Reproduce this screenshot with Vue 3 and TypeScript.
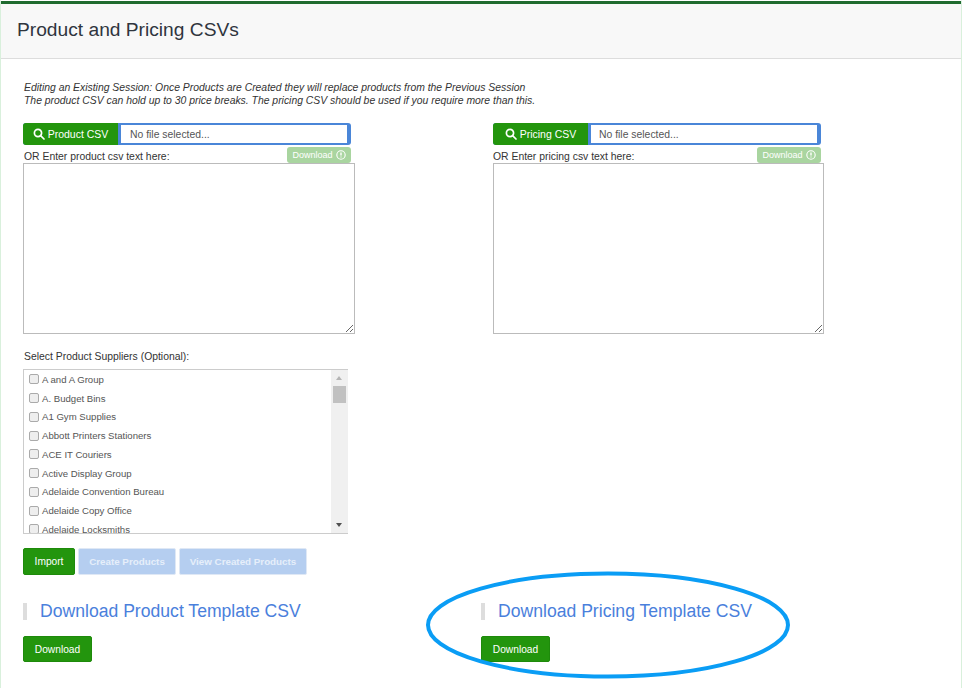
<script setup lang="ts">
const suppliers: string[] = [
  'A and A Group',
  'A. Budget Bins',
  'A1 Gym Supplies',
  'Abbott Printers Stationers',
  'ACE IT Couriers',
  'Active Display Group',
  'Adelaide Convention Bureau',
  'Adelaide Copy Office',
  'Adelaide Locksmiths',
]

const uploads = [
  { button: 'Product CSV', label: 'OR Enter product csv text here:' },
  { button: 'Pricing CSV', label: 'OR Enter pricing csv text here:' },
]

const templates = ['Download Product Template CSV', 'Download Pricing Template CSV']
</script>

<template>
  <div class="page">
    <header class="head">
      <h1>Product and Pricing CSVs</h1>
    </header>
    <main class="body">
      <p class="note">
        Editing an Existing Session: Once Products are Created they will replace products from the Previous Session<br />
        The product CSV can hold up to 30 price breaks. The pricing CSV should be used if you require more than this.
      </p>
      <div class="uploads">
        <section v-for="u in uploads" :key="u.button" class="upload">
          <div class="file">
            <span class="file-btn">
              <svg width="12" height="12" viewBox="0 0 12 12" fill="none" stroke="#fff" stroke-width="1.7">
                <circle cx="5" cy="5" r="3.6" />
                <path d="M7.6 7.6 11 11" stroke-linecap="round" />
              </svg>
              {{ u.button }}
            </span>
            <span class="file-name">No file selected...</span>
          </div>
          <div class="label-row">
            <label>{{ u.label }}</label>
            <span class="mini">
              Download
              <svg width="10" height="10" viewBox="0 0 10 10" fill="none" stroke="#fff">
                <circle cx="5" cy="5" r="4.2" stroke-width="1.1" />
                <path d="M5 2.6v3" stroke-width="1.4" />
                <path d="M5 6.6v1" stroke-width="1.2" />
              </svg>
            </span>
          </div>
          <textarea class="area"></textarea>
        </section>
      </div>

      <div class="suppliers-label">Select Product Suppliers (Optional):</div>
      <div class="suppliers">
        <ul class="list">
          <li v-for="s in suppliers" :key="s">
            <span class="box"></span>
            {{ s }}
          </li>
        </ul>
        <div class="scroll">
          <span class="up"></span>
          <span class="thumb"></span>
          <span class="down"></span>
        </div>
      </div>

      <div class="actions">
        <button class="btn green">Import</button>
        <button class="btn pale">Create Products</button>
        <button class="btn pale">View Created Products</button>
      </div>

      <div class="templates">
        <section v-for="t in templates" :key="t" class="template">
          <h2>{{ t }}</h2>
          <button class="btn green dl">Download</button>
        </section>
      </div>
    </main>

    <svg class="circle" width="370" height="112" viewBox="0 0 370 112" fill="none">
      <ellipse cx="185" cy="56" rx="180" ry="51.5" stroke="#0a9df5" stroke-width="4" />
    </svg>
  </div>
</template>

<style>
html,
body {
  margin: 0;
  background: #fff;
}
</style>

<style scoped>
.page {
  position: relative;
  width: 962px;
  height: 688px;
  box-sizing: border-box;
  overflow: hidden;
  background: #fff;
  border-top: 1px solid #fff;
  border-left: 1px solid #d9f0dc;
  border-right: 1px solid #d9f0dc;
  font-family: "Liberation Sans", Arial, sans-serif;
  color: #333;
}
.head {
  box-sizing: border-box;
  border-top: 3px solid #1f6b2f;
  height: 58px;
  background: #f8f8f8;
  border-bottom: 1px solid #ddd;
  padding: 0 16px;
  display: flex;
  align-items: center;
}
h1 {
  margin: 0;
  font-size: 19.2px;
  font-weight: 400;
  color: #2f353e;
  position: relative;
  top: -1px;
}
.body {
  padding: 0 0 0 22px;
}
.note {
  margin: 22px 0 0 1px;
  font-size: 10.4px;
  line-height: 13px;
  font-style: italic;
  color: #333;
}
.uploads {
  display: flex;
  gap: 138px;
  margin-top: 16px;
}
.upload {
  width: 332px;
}
.file {
  width: 328px;
  height: 22px;
  display: flex;
  box-sizing: border-box;
  border-radius: 3px;
  overflow: hidden;
  background: #4a86d8;
  font-size: 10.5px;
}
.file-btn {
  width: 95px;
  background: #23950d;
  color: #fff;
  display: flex;
  align-items: center;
  justify-content: center;
  gap: 3px;
  flex: none;
}
.file-name {
  flex: 1;
  margin: 2px 4px 2px 3px;
  background: #fff;
  color: #555;
  padding-left: 9px;
  display: flex;
  align-items: center;
  font-size: 10.4px;
}
.upload:last-child .file-name {
  padding-left: 8px;
}
.label-row {
  width: 328px;
  height: 18px;
  display: flex;
  justify-content: space-between;
  align-items: flex-end;
  font-size: 10.4px;
}
.label-row label {
  padding: 0 0 1px 1px;
}
.upload:last-child .label-row label {
  padding-left: 0;
}
.mini {
  width: 64px;
  height: 16px;
  background: #a9d5a0;
  border-radius: 3px;
  color: #fff;
  font-size: 9px;
  display: flex;
  align-items: center;
  justify-content: center;
  gap: 3px;
  padding-bottom: 1px;
  box-sizing: border-box;
}
.area {
  display: block;
  width: 332px;
  height: 171px;
  box-sizing: border-box;
  margin: 0;
  border: 1px solid #bbb;
  background: #fff;
}
.upload:last-child .area {
  width: 331px;
}
.suppliers-label {
  margin: 16px 0 0 1px;
  font-size: 10.4px;
  line-height: 14px;
}
.suppliers {
  margin-top: 5px;
  width: 325px;
  height: 165px;
  box-sizing: border-box;
  display: flex;
  border: 1px solid #ccc;
  border-right: 0;
  overflow: hidden;
}
.list {
  flex: 1;
  list-style: none;
  margin: 0;
  padding: 0;
  font-size: 9.6px;
  color: #555;
}
.list li {
  height: 18.75px;
  display: flex;
  align-items: center;
  gap: 3px;
  padding-left: 5px;
}
.box {
  width: 8px;
  height: 8px;
  border: 1px solid #aaa;
  border-radius: 2px;
  background: #eee;
  flex: none;
}
.scroll {
  position: relative;
  width: 17px;
  background: #f0f0f0;
  flex: none;
}
.thumb {
  position: absolute;
  left: 2px;
  top: 16px;
  width: 13px;
  height: 17px;
  background: #c1c1c1;
}
.up,
.down {
  position: absolute;
  left: 5px;
  width: 0;
  height: 0;
  border-left: 3.5px solid transparent;
  border-right: 3.5px solid transparent;
}
.up {
  top: 6px;
  border-bottom: 4px solid #b5b5b5;
}
.down {
  bottom: 6px;
  border-top: 4px solid #505050;
}
.actions {
  display: flex;
  gap: 3px;
  margin-top: 14px;
}
.btn {
  height: 27px;
  box-sizing: border-box;
  padding: 0;
  border: 1px solid #1e8a0b;
  border-radius: 2px;
  font: 400 10.2px "Liberation Sans", Arial, sans-serif;
  color: #fff;
}
.green {
  width: 52px;
  background: #23950d;
}
.pale {
  background: #b5cef0;
  border: 1px solid #dfe8f5;
  width: 98px;
  color: #e6eefa;
  font-weight: 700;
  font-size: 9.8px;
}
.pale:last-child {
  width: 128px;
}
.templates {
  display: flex;
  margin-top: 28px;
}
.template {
  width: 458px;
}
.template h2 {
  margin: 0;
  height: 17px;
  border-left: 4px solid #ddd;
  padding-left: 13px;
  font-size: 17.6px;
  font-weight: 400;
  line-height: 17px;
  color: #4a80dc;
  white-space: nowrap;
}
.dl {
  width: 69px;
  height: 26px;
  margin-top: 16px;
  display: block;
}
.circle {
  position: absolute;
  left: 422px;
  top: 568px;
}
</style>
